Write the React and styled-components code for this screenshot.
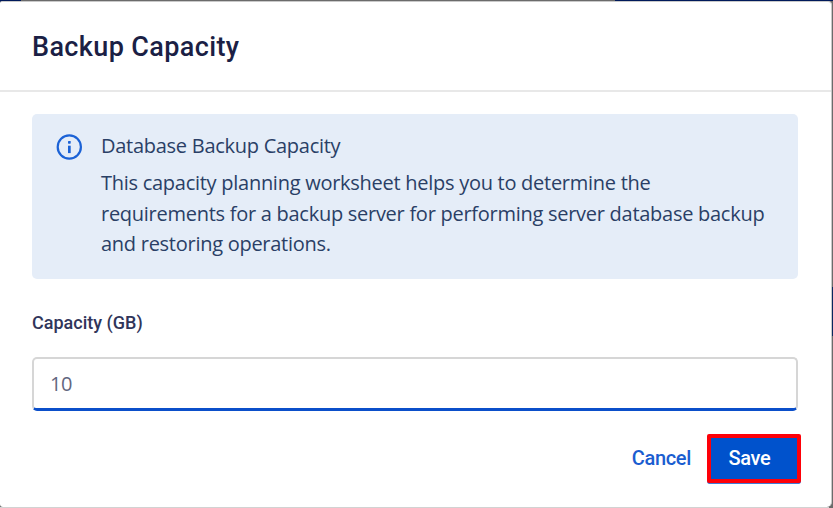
import React, { useState } from 'react';
import styled, { createGlobalStyle } from 'styled-components';

const GlobalStyle = createGlobalStyle`
  * {
    box-sizing: border-box;
  }

  body {
    margin: 0;
    overflow: hidden;
  }
`;

const Backdrop = styled.div`
  width: 833px;
  height: 508px;
  padding: 1px 1px 1px 0;
  background:
    linear-gradient(#00195a, #00195a) 0 0 / 21px 2px no-repeat,
    linear-gradient(#00195a, #00195a) 615px 0 / 218px 1px no-repeat,
    linear-gradient(#0a285f, #0a285f) 100% 287px / 3px 49px no-repeat,
    linear-gradient(#d2d2d2, #d2d2d2) 0 100% / 829px 1px no-repeat,
    #6b6b6b;
`;

const Modal = styled.div`
  height: 506px;
  display: flex;
  flex-direction: column;
  background: #fff;
  border: solid #c9c9c9;
  border-width: 1px 1px 0 0;
  border-radius: 2px 4px 5px 3px;
`;

const Header = styled.div`
  height: 90px;
  padding: 0 32px;
  display: flex;
  align-items: center;
  border-bottom: 2px solid #e8e8e8;
`;

const Title = styled.h1`
  margin: 1px 0 0;
  color: #1b1f45;
  font: 500 27px/32px Roboto, sans-serif;
  letter-spacing: 0.38px;
`;

const Body = styled.div`
  padding: 22px 33px 0 32px;
  display: flex;
  flex-direction: column;
`;

const Notice = styled.div`
  height: 165px;
  padding: 16px 24px;
  display: flex;
  gap: 19px;
  background: #e5edf8;
  border-radius: 5px;
  color: #2a3f66;
  font: 400 20px/31px 'Open Sans', sans-serif;
  letter-spacing: -0.27px;
`;

const InfoIcon = styled.svg`
  width: 26px;
  height: 26px;
  margin-top: 4px;
  flex: none;
`;

const NoticeTitle = styled.div`
  margin-bottom: 7px;
  white-space: nowrap;
`;

const NoticeText = styled.div`
  line-height: 30.5px;
  white-space: nowrap;
`;

const Label = styled.label`
  margin: 32px 0 22px;
  color: #30355a;
  font: 500 18px/24px Roboto, sans-serif;
`;

const Input = styled.input`
  width: 766px;
  height: 54px;
  padding: 0 16px;
  border: 2px solid #d6d6d6;
  border-bottom: 3px solid #0b4fca;
  border-radius: 5px;
  outline: none;
  color: #62667f;
  background: #fff;
  font: 400 20px/30px 'Open Sans', sans-serif;
  letter-spacing: -0.4px;
`;

const Footer = styled.div`
  padding: 23px 30px 0 0;
  display: flex;
  justify-content: flex-end;
  gap: 16px;
`;

const Button = styled.button`
  width: ${(props) => (props.$primary ? '94px' : 'auto')};
  height: 49px;
  padding: ${(props) => (props.$primary ? '0 9px 2px 0' : '0 0 2px')};
  color: ${(props) => (props.$primary ? '#fff' : '#1a5dd0')};
  background: ${(props) => (props.$primary ? '#0052cc' : 'none')};
  border: ${(props) => (props.$primary ? '4px solid #fe0008' : '0')};
  border-radius: 2px;
  box-shadow: ${(props) => (props.$primary ? '0 1px 0 -0.3px #0052cc' : 'none')};
  font: 500 20px/24px Roboto, sans-serif;
  letter-spacing: -0.33px;
`;

function App() {
  const [capacity, setCapacity] = useState('10');

  return (
    <Backdrop>
      <GlobalStyle />
      <Modal>
        <Header>
          <Title>Backup Capacity</Title>
        </Header>
        <Body>
          <Notice>
            <InfoIcon viewBox="0 0 26 26" fill="none">
              <circle cx="13.3" cy="13" r="11.6" stroke="#1b62d6" strokeWidth="2.2" />
              <rect x="12" y="7" width="2.7" height="2.7" rx="0.6" fill="#1b62d6" />
              <rect x="12" y="11.7" width="2.7" height="7.4" fill="#1b62d6" />
            </InfoIcon>
            <div>
              <NoticeTitle>Database Backup Capacity</NoticeTitle>
              <NoticeText>
                This capacity planning worksheet helps you to determine the<br />
                requirements for a backup server for performing server database backup<br />
                and restoring operations.
              </NoticeText>
            </div>
          </Notice>
          <Label htmlFor="capacity">Capacity (GB)</Label>
          <Input id="capacity" value={capacity} onChange={(e) => setCapacity(e.target.value)} />
        </Body>
        <Footer>
          <Button>Cancel</Button>
          <Button $primary>Save</Button>
        </Footer>
      </Modal>
    </Backdrop>
  );
}

export default App;
